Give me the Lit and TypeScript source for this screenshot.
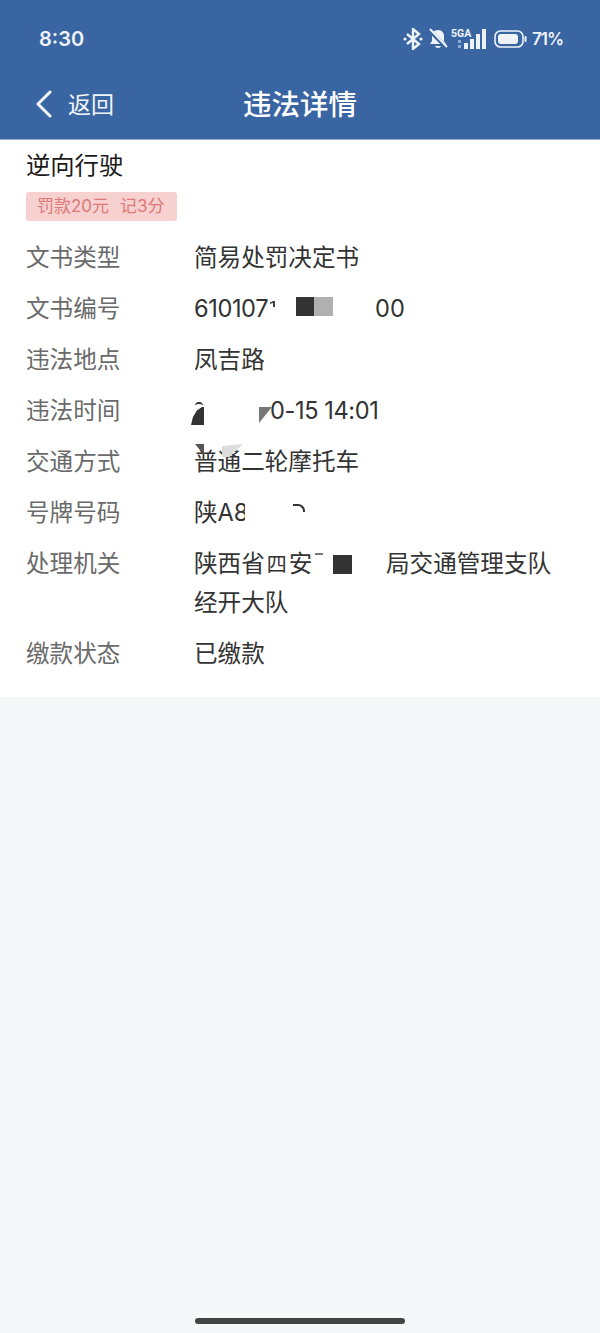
import { LitElement, html, css, svg } from "lit";
import { customElement } from "lit/decorators.js";

const rows: [string, unknown][] = [
  ["文书类型", html`简易处罚决定书`],
  ["文书编号", html`<span class="slot tight" style="width:181px">610107</span>00<i class="r" style="left:76px;top:11px;width:5px;height:6px;background:#444;clip-path:polygon(0 25%,60% 0,100% 0,100% 100%,60% 100%,60% 35%,0 50%)"></i><i class="r" style="left:102px;top:7px;width:18px;height:19px;background:#333"></i><i class="r" style="left:120px;top:7px;width:19px;height:19px;background:#b0b0b0"></i>`],
  ["违法地点", html`凤吉路`],
  ["违法时间", html`<span class="slot" style="width:76px"></span><span class="tight">0-15 14:01</span><i class="r" style="left:-3px;top:15px;width:13px;height:18px;background:#333;clip-path:polygon(0 100%,15% 55%,45% 20%,85% 0,100% 0,100% 100%)"></i><i class="r arc2" style="left:1px;top:10px"></i><i class="r" style="left:65px;top:15px;width:13px;height:16px;background:#777;clip-path:polygon(0 0,100% 0,0 100%)"></i>`],
  ["交通方式", html`普通二轮摩托车<i class="r" style="left:1px;top:1px;width:9px;height:11px;background:#555;clip-path:polygon(0 0,100% 0,100% 100%)"></i><i class="r" style="left:28px;top:1px;width:21px;height:13px;background:#ddd;clip-path:polygon(0 15%,100% 0,35% 100%,0 100%)"></i>`],
  ["号牌号码", html`陕A8<i class="r" style="left:51px;top:8px;width:10px;height:24px;background:#fff"></i><i class="r arc" style="left:99px;top:10px"></i>`],
  ["处理机关", html`<span class="slot" style="width:192px">陕西省<span class="small">四</span>安</span>局交通管理支队<br />经开大队<i class="r" style="left:121px;top:8px;width:8px;height:2px;background:#777"></i><i class="r" style="left:139px;top:10px;width:19px;height:19px;background:#333"></i>`],
  ["缴款状态", html`已缴款`],
];

@customElement("app-root")
export class AppRoot extends LitElement {
  static styles = css`
    :host { display: block; width: 600px; height: 1333px; background: #f4f8f9; position: relative; overflow: hidden;
      font-family: Inter, "Noto Sans CJK SC", sans-serif; }
    .head { background: #3a65a3; height: 139px; border-bottom: 1px solid #8fb0d3; color: #fff; display: flex; flex-direction: column; }
    .status { height: 78px; display: flex; align-items: center; justify-content: space-between; padding: 0 37px 0 39px; }
    .time { font-size: 20px; font-weight: 600; color: #eef3fa; }
    .icons { display: flex; align-items: center; }
    .pct { font-size: 17px; font-weight: 600; letter-spacing: -1px; color: #eef3fa; margin-left: 5px; }
    .nav { position: relative; height: 51px; display: flex; align-items: center; padding-left: 35px; gap: 15px; }
    .back { font-size: 23px; color: #f2f5fa; position: relative; top: -1px; }
    .title { position: absolute; left: 0; right: 0; text-align: center; font-size: 28.500px; font-weight: 500; top: 5px; line-height: 44px; }
    .card { background: #fff; height: 557px; padding: 0 26px; box-sizing: border-box; }
    .name { font-size: 24.300px; line-height: 32px; color: #1a1a1a; padding-top: 9px; }
    .badge { display: flex; gap: 11px; margin-top: 11px; height: 29px; line-height: 29px; width: 151px; box-sizing: border-box; padding-left: 11px;
      background: #f7d0d0; color: #dc7a7a; font-size: 17px; border-radius: 3px; white-space: nowrap; }
    .rows { display: flex; flex-direction: column; gap: 13px; margin-top: 18px; }
    .row { display: flex; font-size: 23.600px; line-height: 38px; }
    .label { width: 168px; flex: none; color: #6a6a6a; }
    .val { flex: 1; color: #333; position: relative; }
    .slot { display: inline-block; white-space: nowrap; }
    .tight { letter-spacing: -0.4px; }
    .arc { width: 12px; height: 8px; box-sizing: border-box; border-top: 2px solid #333; border-right: 2px solid #333; border-radius: 0 7px 0 0; }
    .arc2 { width: 8px; height: 4px; box-sizing: border-box; border-top: 2px solid #333; border-radius: 6px 6px 0 0; }
    .small { font-size: 20px; margin: 0 2px; }
    .r { position: absolute; display: block; }
    .homebar { position: absolute; left: 195px; top: 1318px; width: 210px; height: 6px; border-radius: 3px; background: #444; }
  `;

  render() {
    return html`
      <div class="head">
        <div class="status">
          <span class="time">8:30</span>
          <span class="icons">
            <svg width="20" height="22" viewBox="0 0 20 22" fill="none" stroke="#eef3fa" stroke-width="2.400">
              ${svg`<path d="M4 6l12 10-6 5V1l6 5L4 16"/><circle cx="2" cy="11" r="1.600" fill="#eef3fa" stroke="none"/><circle cx="18" cy="11" r="1.600" fill="#eef3fa" stroke="none"/>`}
            </svg>
            <svg width="20" height="22" viewBox="0 0 20 22" style="margin-left:5px">
              ${svg`<path d="M10 2c4 0 6 3 6 6v5l2 3H2l2-3V8c0-3 2-6 6-6z" fill="#eef3fa"/><path d="M7 18h6c-.5 2.500-5.500 2.500-6 0z" fill="#eef3fa"/><path d="M1 2l18 18" stroke="#3a65a3" stroke-width="4"/><path d="M2 1l17 18" stroke="#eef3fa" stroke-width="2"/>`}
            </svg>
            <svg width="36" height="22" viewBox="0 0 36 22" style="margin-left:3px">
              ${svg`<text x="0" y="9" font-size="10.500" font-weight="700" fill="#eef3fa" font-family="Roboto, sans-serif">5GA</text>
              <rect x="7" y="12" width="3" height="3" fill="#8fa9cf"/><rect x="7" y="17" width="3" height="3" fill="#8fa9cf"/>
              <rect x="13" y="15" width="4" height="6" fill="#eef3fa"/><rect x="19" y="11" width="4" height="10" fill="#eef3fa"/><rect x="25" y="6" width="4" height="15" fill="#eef3fa"/><rect x="31" y="1" width="4" height="20" fill="#eef3fa"/>`}
            </svg>
            <svg width="33" height="18" viewBox="0 0 33 18" style="margin-left:7px">
              ${svg`<rect x="1" y="1" width="28" height="16" rx="5.500" fill="none" stroke="#eef3fa" stroke-width="1.600"/><rect x="4" y="4" width="20" height="10" rx="3" fill="#eef3fa"/><rect x="30.500" y="6" width="2" height="6" rx="1" fill="#eef3fa"/>`}
            </svg>
            <span class="pct">71%</span>
          </span>
        </div>
        <div class="nav">
          <svg width="18" height="28" viewBox="0 0 18 28" fill="none" stroke="#f2f5fa" stroke-width="3" stroke-linecap="round" stroke-linejoin="round">
            ${svg`<path d="M15 2L3 14l12 12"/>`}
          </svg>
          <span class="back">返回</span>
          <span class="title">违法详情</span>
        </div>
      </div>
      <div class="card">
        <div class="name">逆向行驶</div>
        <div class="badge"><span>罚款20元</span><span>记3分</span></div>
        <div class="rows">
          ${rows.map(([k, v]) => html`<div class="row"><div class="label">${k}</div><div class="val">${v}</div></div>`)}
        </div>
      </div>
      <div class="homebar"></div>
    `;
  }
}
